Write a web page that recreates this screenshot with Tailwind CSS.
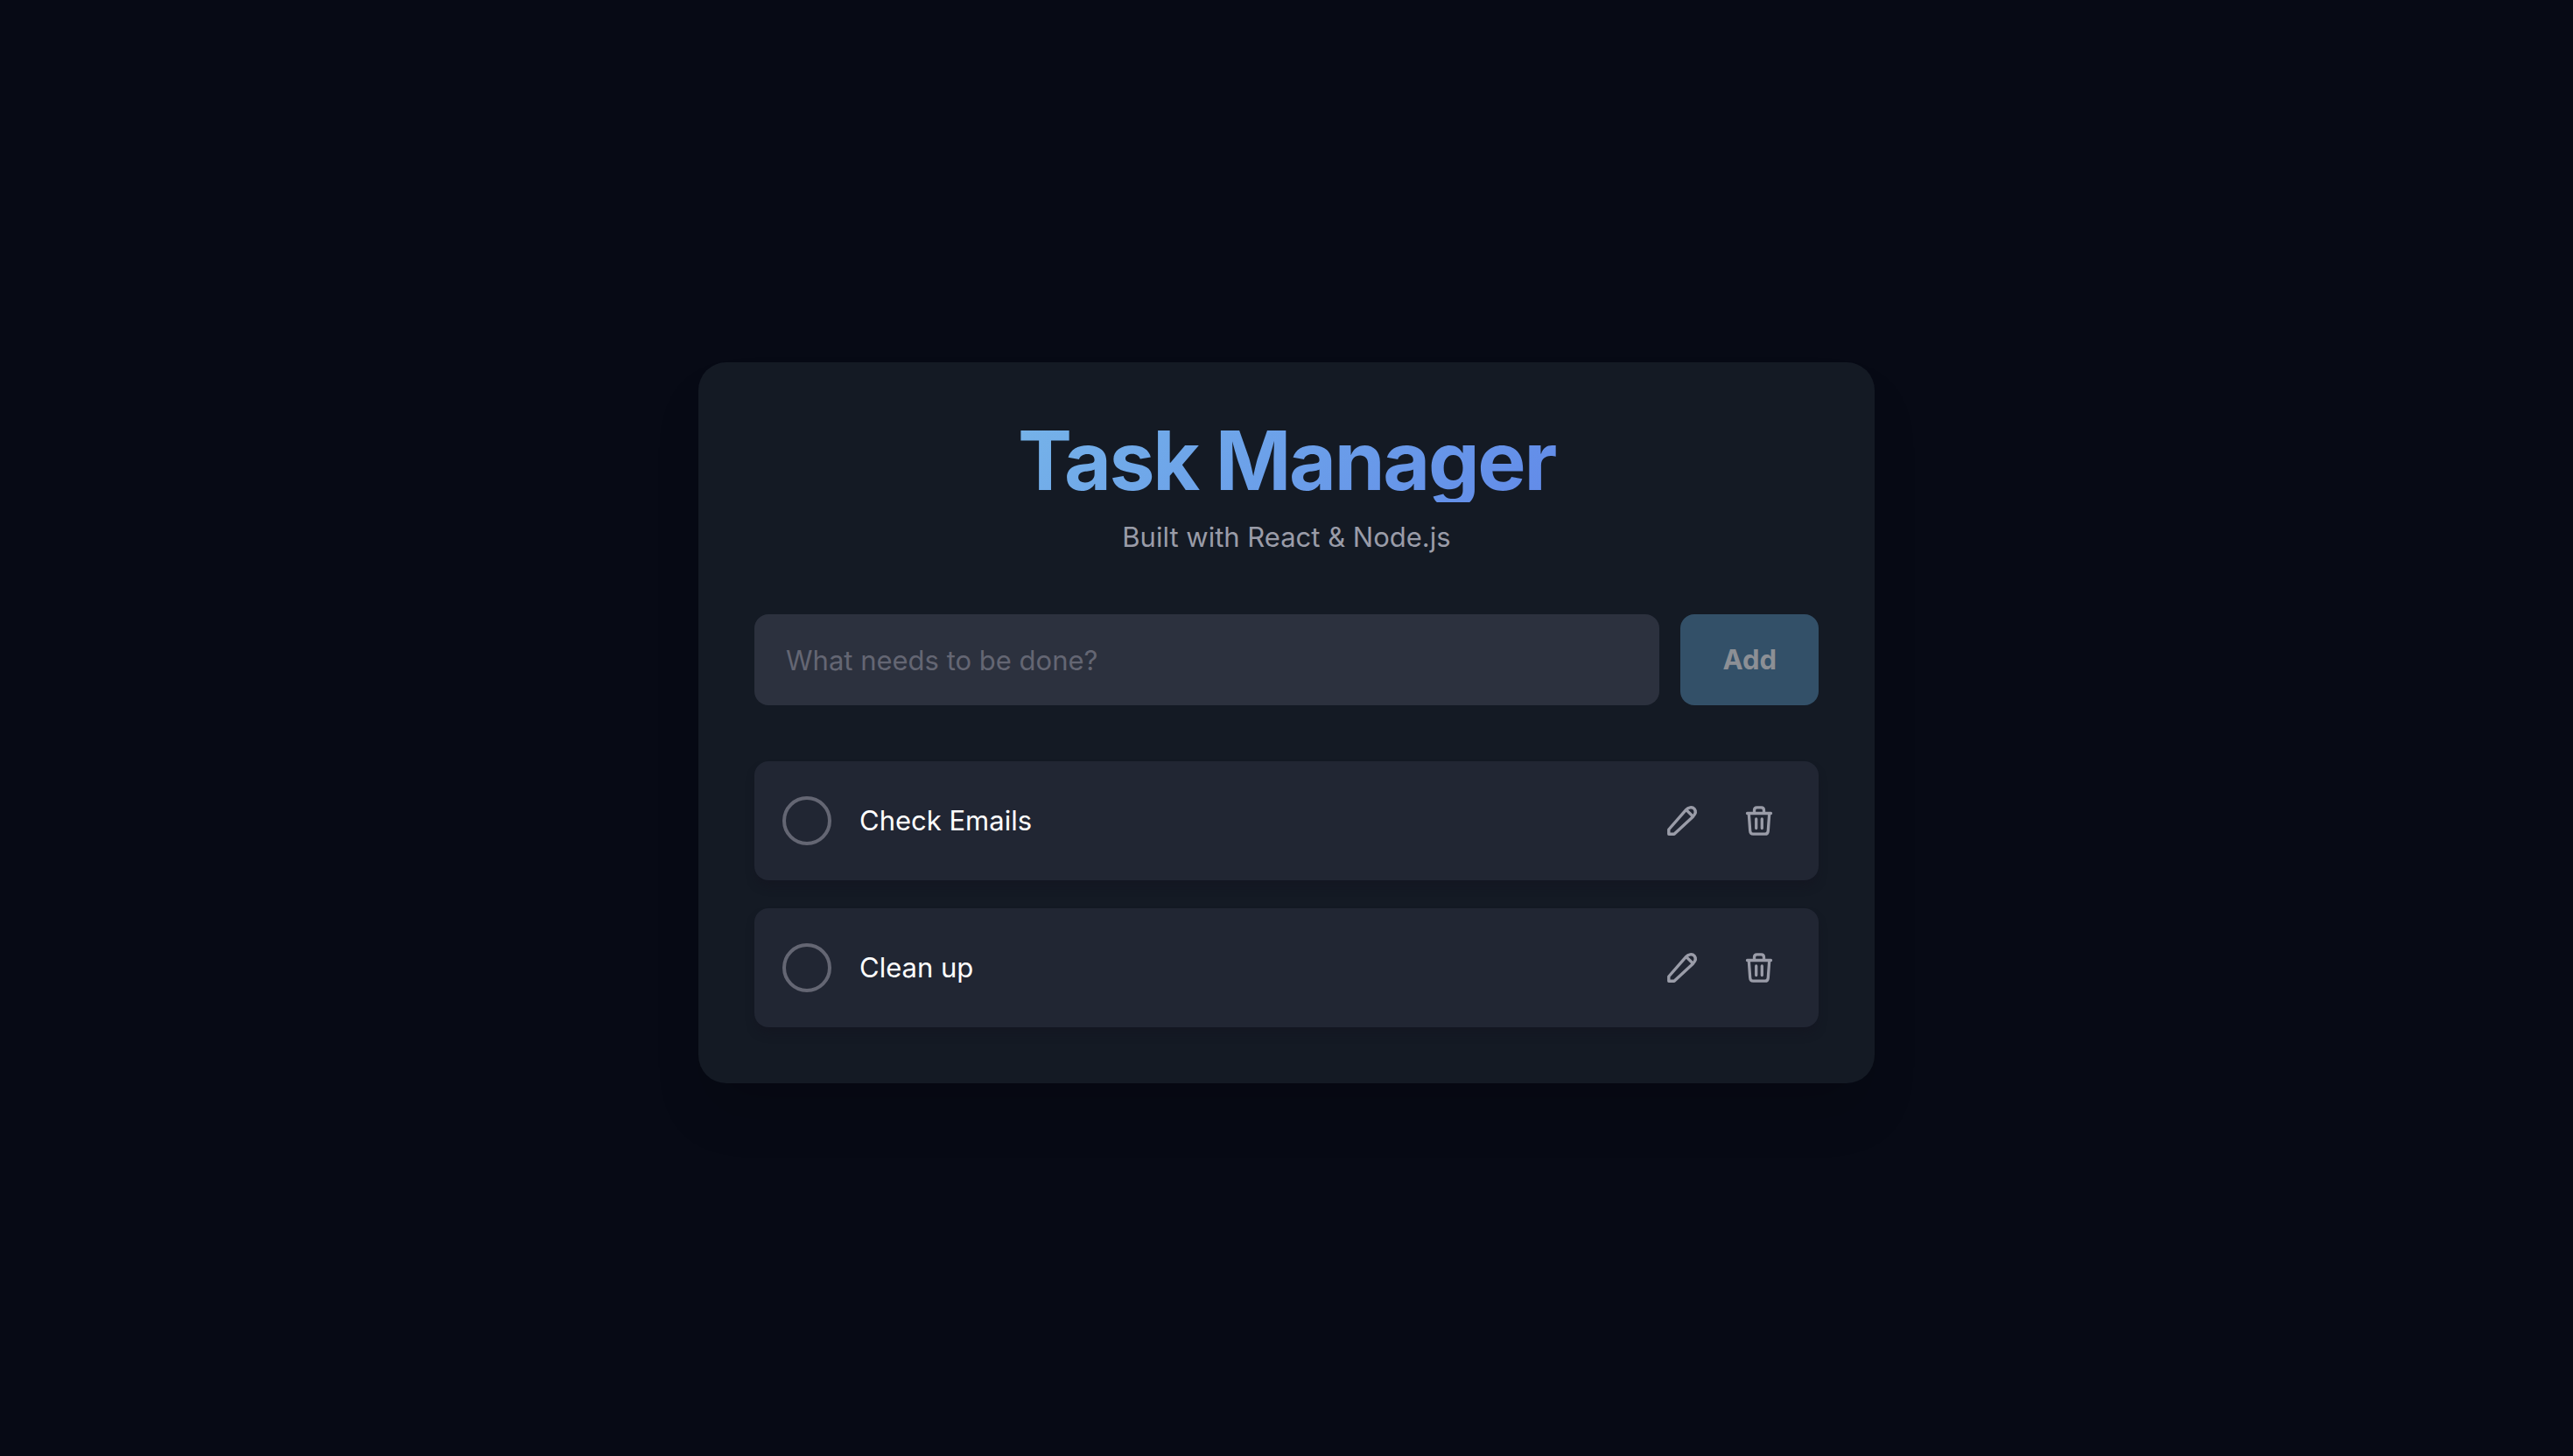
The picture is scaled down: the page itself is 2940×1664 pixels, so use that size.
<!DOCTYPE html>
<html lang="en">
<head>
<meta charset="utf-8">
<meta name="viewport" content="width=device-width, initial-scale=1">
<title>Task Manager</title>
<script src="https://cdn.jsdelivr.net/npm/@tailwindcss/browser@4"></script>
</head>
<body class="flex min-h-screen items-center justify-center bg-[#070a15] pb-3 font-[Inter,sans-serif] text-[31px] text-white">
<svg class="hidden" aria-hidden="true">
  <symbol id="pencil" viewBox="0 0 40 40">
    <path d="M4.800 35.200V30L24.600 7.400C27 4.700 31.500 3.600 34 6.400C36.400 9.400 35 12.600 32.600 15.200L11 35.200ZM24.600 7.400L32.600 15.200" fill="none" stroke="currentColor" stroke-width="3.400" stroke-linejoin="round"/>
  </symbol>
  <symbol id="trash" viewBox="0 0 40 40">
    <path d="M6.500 11.500H33.500M8.300 12L9.700 31.500C9.900 34 11.200 35.200 13.200 35.200H26.800C28.800 35.200 30.100 34 30.300 31.500L31.700 12M14.500 11V8C14.500 6 15.500 4.800 17.500 4.800H22.500C24.500 4.800 25.500 6 25.500 8V11M16.700 18V28.500M23.300 18V28.500" fill="none" stroke="currentColor" stroke-width="3.300" stroke-linecap="round" stroke-linejoin="round"/>
  </symbol>
</svg>
<main class="w-full max-w-[1344px] rounded-[32px] bg-[#141a24] p-16 shadow-[0_40px_60px_-10px_rgba(0,0,0,0.15)]">
  <header class="mb-16 text-center">
    <h1 class="bg-linear-135 from-[#7fc4e8] to-[#5b78e8] bg-clip-text text-[93px] leading-24 font-bold tracking-tight text-transparent">Task Manager</h1>
    <p class="mt-4 leading-12 text-[#9a9ca8]">Built with React &amp; Node.js</p>
  </header>
  <form class="mb-16 flex gap-6">
    <input type="text" aria-label="New task" placeholder="What needs to be done?" class="h-26 min-w-0 flex-1 rounded-2xl bg-[#2c313e] px-9 placeholder:text-[#646673]">
    <button type="button" disabled class="h-26 rounded-2xl bg-[#335068] px-12 font-bold text-[#8c8f95]">Add</button>
  </form>
  <ul class="flex flex-col gap-8">
    <li class="flex h-34 items-center rounded-2xl bg-[#212633] px-8 shadow-[0_8px_12px_-2px_rgba(20,18,30,0.4)]">
      <input type="checkbox" id="task-1" class="size-14 appearance-none rounded-full border-4 border-[#646673]">
      <label for="task-1" class="flex-1 pl-8">Check Emails</label>
      <div class="flex gap-4">
        <button type="button" aria-label="Edit Check Emails" class="p-4 text-[#9a9ca8]"><svg class="size-10"><use href="#pencil"/></svg></button>
        <button type="button" aria-label="Delete Check Emails" class="p-4 text-[#9a9ca8]"><svg class="size-10"><use href="#trash"/></svg></button>
      </div>
    </li>
    <li class="flex h-34 items-center rounded-2xl bg-[#212633] px-8 shadow-[0_8px_12px_-2px_rgba(20,18,30,0.4)]">
      <input type="checkbox" id="task-2" class="size-14 appearance-none rounded-full border-4 border-[#646673]">
      <label for="task-2" class="flex-1 pl-8">Clean up</label>
      <div class="flex gap-4">
        <button type="button" aria-label="Edit Clean up" class="p-4 text-[#9a9ca8]"><svg class="size-10"><use href="#pencil"/></svg></button>
        <button type="button" aria-label="Delete Clean up" class="p-4 text-[#9a9ca8]"><svg class="size-10"><use href="#trash"/></svg></button>
      </div>
    </li>
  </ul>
</main>
</body>
</html>
